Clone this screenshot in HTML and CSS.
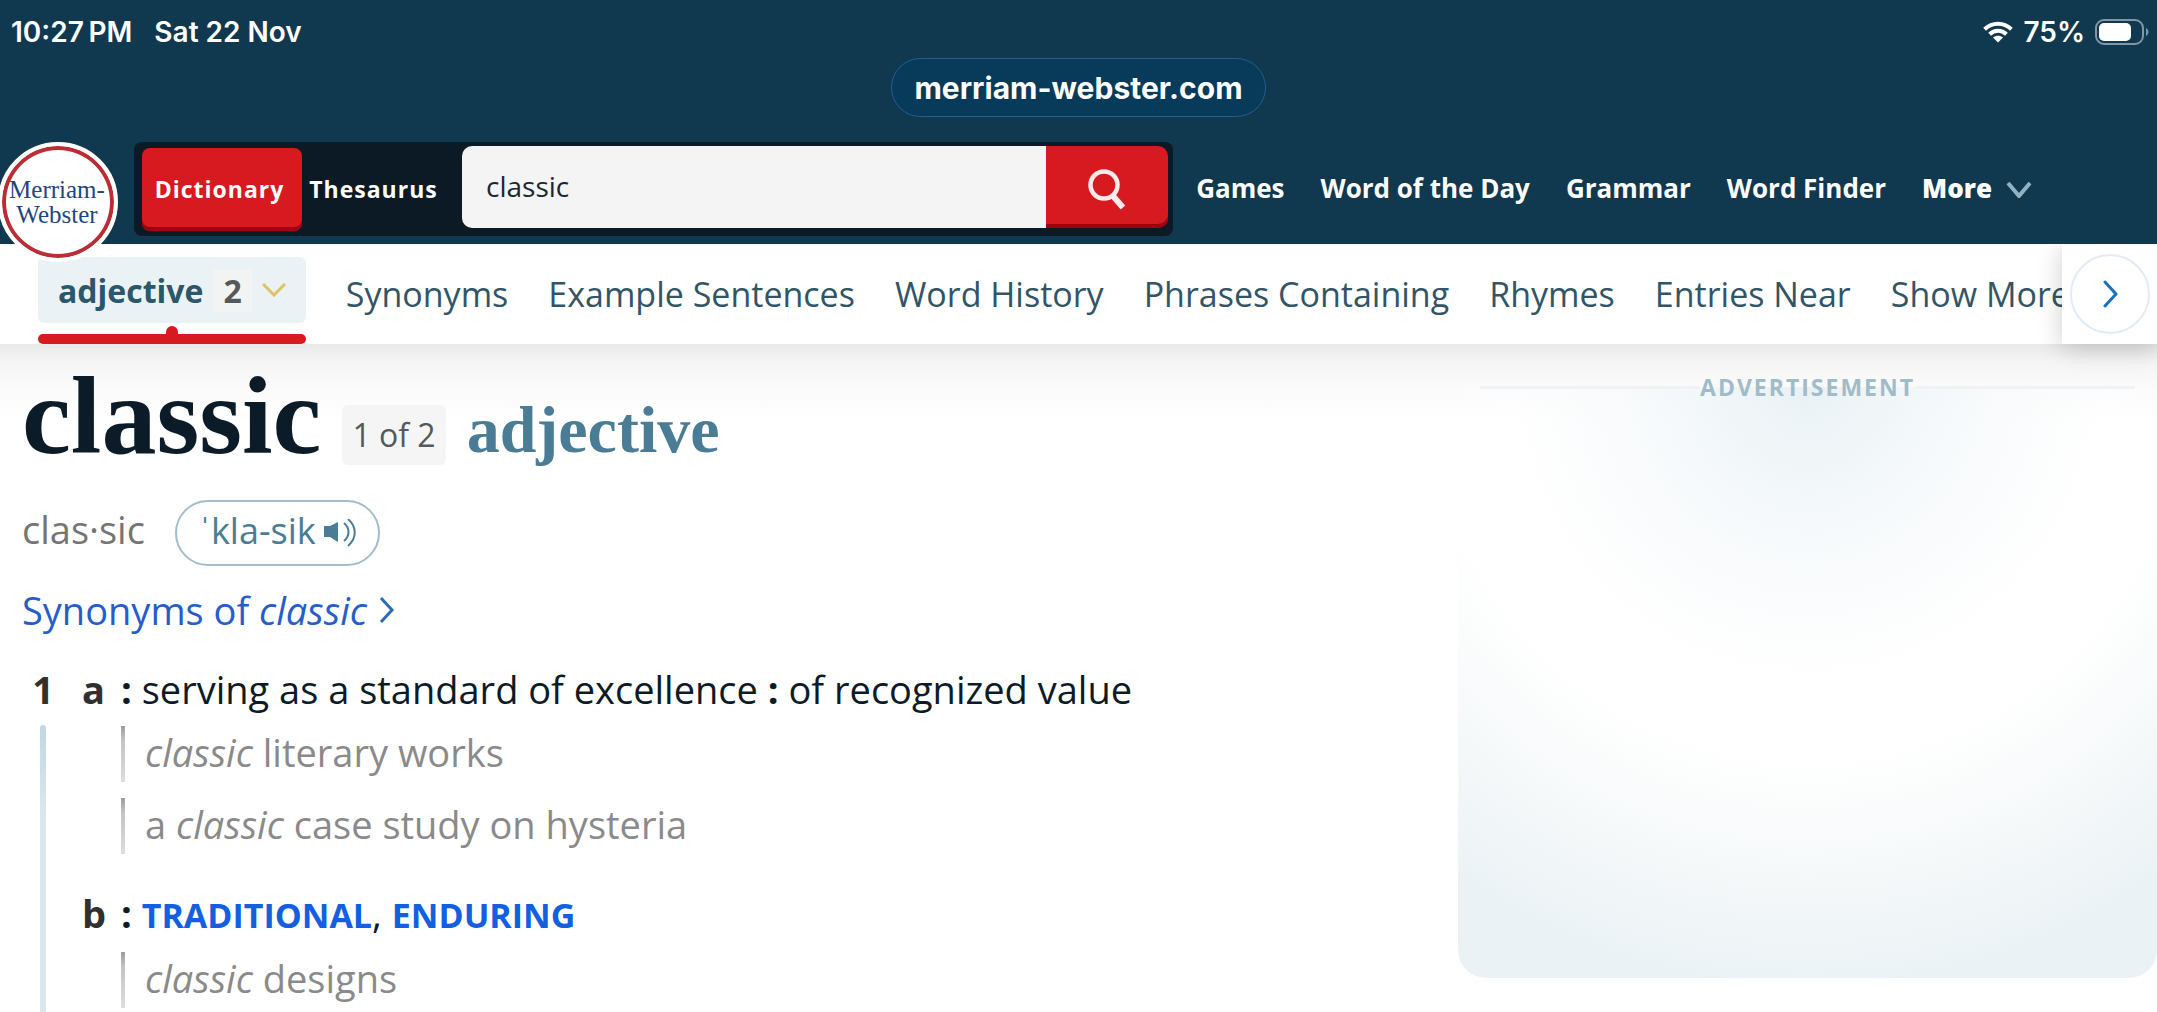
FILE: index.html
```html
<!DOCTYPE html>
<html lang="en">
<head>
    <meta charset="UTF-8">
    <meta name="viewport" content="width=device-width, initial-scale=1.0">
    <title>CLASSIC Definition &amp; Meaning - Merriam-Webster</title>
    <link rel="stylesheet" href="styles.css">
</head>
<body>
    <header class="header">
        <div class="status-bar">
            <span class="status-time">10:27&#8201;PM</span>
            <span>Sat 22 Nov</span>
            <div class="status-right">
                <svg class="wifi" viewBox="0 0 30 22" aria-hidden="true">
                    <g fill="none" stroke="#fff" stroke-width="4">
                        <path d="M1.6 8.2C9.2.8 20.8.8 28.4 8.2"/>
                        <path d="M6.6 13.3C11.4 8.7 18.6 8.7 23.4 13.3"/>
                    </g>
                    <path d="M10 16.600C13 14 17 14 20 16.600L15 21.600Z" fill="#fff"/>
                </svg>
                <span>75%</span>
                <svg class="battery" viewBox="0 0 54 26" aria-hidden="true">
                    <rect x="1" y="1" width="47" height="24" rx="8" fill="none" stroke="#8296a4" stroke-width="2"/>
                    <rect x="4" y="4" width="32" height="18" rx="5" fill="#fff"/>
                    <path d="M51 9C54.300 10.500 54.300 15.500 51 17Z" fill="#8296a4"/>
                </svg>
            </div>
        </div>

        <div class="address-bar">
            <a href="#" class="address">merriam-webster.com</a>
        </div>

        <div class="nav-bar">
            <a href="#" class="logo">Merriam-<br>Webster</a>
            <form class="search">
                <button type="button" class="mode mode-active">Dictionary</button>
                <button type="button" class="mode">Thesaurus</button>
                <input type="text" class="search-input" value="classic" aria-label="Search the dictionary">
                <button type="submit" class="search-btn" aria-label="Search">
                    <svg viewBox="0 0 40 42" aria-hidden="true">
                        <circle cx="17" cy="17" r="13.500" fill="none" stroke="#fdeaea" stroke-width="4.500"/>
                        <path d="M25.500 27.500L36 39.500" fill="none" stroke="#fdeaea" stroke-width="6"/>
                    </svg>
                </button>
            </form>
            <nav class="main-nav">
                <a href="#">Games</a>
                <a href="#">Word of the Day</a>
                <a href="#">Grammar</a>
                <a href="#">Word Finder</a>
                <button type="button" class="more">
                    More
                    <svg viewBox="0 0 26 20" aria-hidden="true"><path d="M2 5L13 18L24 5" fill="none" stroke="#8fb3c4" stroke-width="4"/></svg>
                </button>
            </nav>
        </div>
    </header>

    <nav class="tabs">
        <div class="tab-active">
            <button type="button" class="tab-button">
                adjective <span class="count">2</span>
                <svg viewBox="0 0 24 14" aria-hidden="true"><path d="M1 1L12 12L23 1" fill="none" stroke="#dfc266" stroke-width="3"/></svg>
            </button>
        </div>
        <a href="#">Synonyms</a>
        <a href="#">Example Sentences</a>
        <a href="#">Word History</a>
        <a href="#">Phrases Containing</a>
        <a href="#">Rhymes</a>
        <a href="#">Entries Near</a>
        <a href="#">Show More</a>
        <div class="tabs-end">
            <button type="button" class="next" aria-label="Next">
                <svg viewBox="0 0 18 28" aria-hidden="true"><path d="M4 2L15 14L4 26" fill="none" stroke="#1a6fba" stroke-width="3" stroke-linecap="round" stroke-linejoin="round"/></svg>
            </button>
        </div>
    </nav>

    <main class="content">
        <article class="entry">
            <div class="headword">
                <h1>classic</h1>
                <span class="entry-number">1 of 2</span>
                <h2>adjective</h2>
            </div>

            <div class="pronunciation">
                <span>clas·sic</span>
                <button type="button" class="play">
                    ˈkla-sik
                    <svg viewBox="0 0 34 28" aria-hidden="true">
                        <path d="M0 7H6L14 3V23L6 18H0Z" fill="#4a7d95"/>
                        <path d="M20 4C26 9 26 17 20 22M24 0C33 8 33 19 24 27" fill="none" stroke="#4a7d95" stroke-width="2"/>
                    </svg>
                </button>
            </div>

            <a href="#" class="synonyms-link">
                <span>Synonyms of <em>classic</em></span>
                <svg viewBox="0 0 16 26" aria-hidden="true"><path d="M2 1L13 13L2 25" fill="none" stroke="#2c6bb8" stroke-width="3"/></svg>
            </a>

            <section class="sense">
                <div class="sense-number">1</div>
                <div class="sense-list">
                    <div class="definition">
                        <span class="letter">a</span>
                        <p><b>:</b> serving as a standard of excellence <b>:</b> of recognized value</p>
                    </div>
                    <ul class="examples">
                        <li><em>classic</em> literary works</li>
                        <li>a <em>classic</em> case study on hysteria</li>
                    </ul>
                    <div class="definition">
                        <span class="letter">b</span>
                        <p><b>:</b> <a href="#">TRADITIONAL</a>, <a href="#">ENDURING</a></p>
                    </div>
                    <ul class="examples">
                        <li><em>classic</em> designs</li>
                    </ul>
                </div>
            </section>
        </article>

        <aside class="ad">
            <div class="ad-label">ADVERTISEMENT</div>
            <div class="ad-box"></div>
        </aside>
    </main>
</body>
</html>
```
FILE: styles.css
```css
* {
    box-sizing: border-box;
}
body {
    margin: 0;
    min-height: 100vh;
    display: flex;
    flex-direction: column;
    font-family: "Open Sans", sans-serif;
    background-color: #fff;
    color: #0d1b27;
}
h1, h2, p, ul {
    margin: 0;
    padding: 0;
}
a {
    color: inherit;
    text-decoration: none;
}
button {
    border: none;
    background: none;
    padding: 0;
    font: inherit;
    color: inherit;
    cursor: pointer;
}

/* Header */
.header {
    position: relative;
    z-index: 2;
    background-color: #10384f;
    color: #fff;
    padding-bottom: 8px;
}
.status-bar {
    display: flex;
    align-items: center;
    gap: 22px;
    height: 58px;
    padding: 6px 8px 0 11px;
    font-family: Inter, sans-serif;
    font-size: 28px;
    font-weight: 600;
}
.status-right {
    display: flex;
    align-items: center;
    gap: 10px;
    margin-left: auto;
}
.wifi {
    width: 30px;
    height: 22px;
}
.battery {
    width: 54px;
    height: 26px;
}
.address-bar {
    display: flex;
    justify-content: center;
    margin-bottom: 25px;
}
.address {
    height: 59px;
    padding: 0 22px;
    border: 1px solid #235f91;
    border-radius: 30px;
    background-color: #083a5a;
    font-family: Inter, sans-serif;
    font-size: 30px;
    font-weight: 700;
    line-height: 58px;
}
.nav-bar {
    display: flex;
    align-items: center;
    height: 94px;
    padding-right: 125px;
}
.logo {
    flex: none;
    display: flex;
    align-items: center;
    justify-content: center;
    width: 120px;
    height: 120px;
    margin: 26px 16px 0 -2px;
    padding-right: 2px;
    border: 4px solid #fff;
    border-radius: 50%;
    background-color: #fff;
    box-shadow: inset 0 0 0 4px #bb2d35;
    color: #1f467e;
    font-family: "Liberation Serif", serif;
    font-size: 25px;
    line-height: 25px;
    text-align: center;
}
.search {
    flex: 1;
    display: flex;
    height: 94px;
    padding: 4px 5px 8px 8px;
    border-radius: 8px;
    background-color: #0c1a26;
}
.mode {
    width: 148px;
    margin: 2px 0 -3px;
    padding: 0 5px 2px 0;
    border-radius: 8px;
    font-size: 23px;
    font-weight: 700;
    letter-spacing: 1px;
}
.mode-active {
    width: 160px;
    background-color: #d71920;
    box-shadow: inset 0 -4px #9c0510;
}
.search-input {
    flex: 1;
    min-width: 0;
    margin-left: 12px;
    padding: 0 24px 2px;
    border: none;
    border-radius: 10px 0 0 10px;
    background-color: #f4f4f4;
    color: #1c2730;
    font: 28px "Open Sans", sans-serif;
}
.search-btn {
    display: flex;
    align-items: center;
    justify-content: center;
    width: 122px;
    padding-top: 4px;
    border-radius: 0 10px 10px 0;
    background-color: #d71920;
    box-shadow: inset 0 -4px #9c0510;
}
.search-btn svg {
    width: 40px;
    height: 42px;
}
.main-nav {
    display: flex;
    align-items: center;
    gap: 36px;
    padding: 0 0 2px 23px;
    font-size: 26px;
    font-weight: 700;
    white-space: nowrap;
}
.more {
    display: flex;
    align-items: center;
    gap: 14px;
    font-weight: 800;
}
.more svg {
    width: 26px;
    height: 20px;
}

/* Section tabs */
.tabs {
    position: relative;
    z-index: 1;
    display: flex;
    align-items: center;
    gap: 40px;
    height: 100px;
    padding-left: 38px;
    color: #315566;
    font-size: 34px;
    white-space: nowrap;
}
.tab-active {
    position: relative;
    align-self: stretch;
    padding-top: 13px;
}
.tab-active::before {
    content: "";
    position: absolute;
    right: 0;
    bottom: 0;
    left: 0;
    height: 10px;
    border-radius: 5px;
    background-color: #d71920;
}
.tab-active::after {
    content: "";
    position: absolute;
    bottom: 8px;
    left: 50%;
    width: 12px;
    height: 10px;
    margin-left: -6px;
    border-radius: 6px 6px 0 0;
    background-color: #d71920;
}
.tab-button {
    display: flex;
    align-items: center;
    gap: 10px;
    height: 66px;
    padding: 0 20px;
    border-radius: 6px;
    background-color: #ebf2f5;
    color: #2c566a;
    font-size: 32px;
    font-weight: 700;
}
.count {
    padding: 0 10px;
    background-color: #f2f4f4;
    color: #55595b;
}
.tab-button svg {
    width: 24px;
    height: 14px;
}
.tabs-end {
    position: absolute;
    top: 0;
    right: 0;
    display: flex;
    align-items: center;
    justify-content: center;
    width: 95px;
    height: 100px;
    background-color: #fff;
    box-shadow: 0 4px 24px rgba(0, 0, 0, 0.2);
}
.next {
    display: flex;
    align-items: center;
    justify-content: center;
    width: 80px;
    height: 80px;
    border: 2px solid #e3ecf6;
    border-radius: 50%;
}
.next svg {
    width: 18px;
    height: 28px;
}

/* Entry */
.content {
    flex: 1;
    display: flex;
    background: linear-gradient(#e9e9e9, #f5f5f5 18px, #fbfbfb 45px, #fff 80px);
}
.entry {
    flex: 1;
    display: flex;
    flex-direction: column;
    align-items: flex-start;
    padding: 23px 0 0 22px;
    font-size: 38px;
    line-height: 52px;
}
.headword {
    display: flex;
    align-items: flex-end;
    gap: 21px;
    font-family: "Liberation Serif", serif;
}
h1 {
    color: #0b1b27;
    font-size: 110px;
    line-height: 98px;
}
h2 {
    color: #4a7d95;
    font-size: 66px;
    line-height: 70px;
}
.entry-number {
    padding: 4px 10px;
    border-radius: 6px;
    background-color: #f5f5f5;
    color: #54595e;
    font-family: "Open Sans", sans-serif;
    font-size: 32px;
}
.pronunciation {
    display: flex;
    align-items: baseline;
    gap: 30px;
    margin-top: 35px;
    color: #757575;
}
.play {
    display: flex;
    align-items: center;
    gap: 8px;
    height: 66px;
    padding: 0 20px 4px 22px;
    border: 2px solid #a3bdc8;
    border-radius: 33px;
    color: #4a7d95;
    font-size: 36px;
}
.play svg {
    width: 34px;
    height: 28px;
    margin-top: 4px;
}
.synonyms-link {
    display: flex;
    align-items: center;
    gap: 12px;
    margin-top: 18px;
    color: #265dc9;
}
.synonyms-link svg {
    width: 16px;
    height: 26px;
}
.sense {
    flex: 1;
    display: flex;
    margin-top: 27px;
}
.sense-number {
    display: flex;
    flex-direction: column;
    align-items: center;
    width: 42px;
    color: #303030;
    font-weight: 700;
}
.sense-number::after {
    content: "";
    flex: 1;
    width: 6px;
    margin-top: 10px;
    border-radius: 3px 3px 0 0;
    background: linear-gradient(#c1d6df, #dde6ec 90px);
}
.sense-list {
    padding-left: 18px;
}
.definition {
    display: flex;
}
.letter {
    width: 39px;
    color: #303030;
    font-weight: 700;
}
.definition a {
    color: #1260e0;
    font-size: 34px;
    font-weight: 700;
}
.examples {
    display: flex;
    flex-direction: column;
    gap: 16px;
    margin: 11px 0 33px 39px;
    list-style: none;
    color: #8a8a8a;
}
.examples:last-child {
    margin-bottom: 0;
}
.examples li {
    height: 56px;
    padding-left: 20px;
    border-left: 4px solid;
    border-image: linear-gradient(#999, #c4c4c4 15px, #ddd) 1;
}

/* Ad slot */
.ad {
    display: flex;
    flex-direction: column;
    width: 699px;
    padding-top: 31px;
}
.ad-label {
    position: relative;
    z-index: 1;
    display: flex;
    align-items: center;
    padding: 0 22px;
    color: #a0bcc9;
    font-size: 23px;
    font-weight: 700;
    letter-spacing: 2px;
    line-height: 24px;
}
.ad-label::before,
.ad-label::after {
    content: "";
    flex: 1;
    height: 3px;
    border-radius: 3px;
    background-color: #f0f3f5;
}
.ad-box {
    height: 591px;
    margin-top: -12px;
    border-radius: 0 0 28px 28px;
    background: radial-gradient(circle at 50% 0, rgba(232, 240, 243, 0.9), rgba(240, 246, 249, 0.8) 110px, rgba(249, 251, 252, 0.7) 210px, rgba(255, 255, 255, 0.4) 300px, rgba(255, 255, 255, 0) 370px, #f6f9fa 480px, #ebf2f5 600px);
}
```
